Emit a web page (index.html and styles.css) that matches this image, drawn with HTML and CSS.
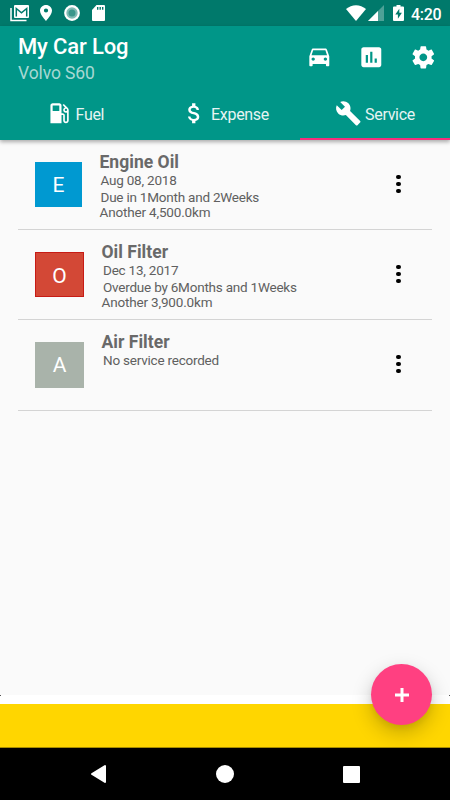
FILE: index.html
```html
<!DOCTYPE html>
<html lang="en">
<head>
<meta charset="utf-8">
<title>My Car Log</title>
<link rel="stylesheet" href="styles.css">
</head>
<body>
<div class="screen">
  <div class="status">
    <svg class="s-mail" width="20" height="18" viewBox="0 0 20 18"><path d="M1 3v12.500h15.500" fill="none" stroke="#fff" stroke-width="1.500"/><rect x="4" y="0" width="15" height="13" rx="1" fill="#fff"/><path d="M6.300 11.500V3.500l5.200 4.300 5.200-4.300v8" fill="none" stroke="#00796b" stroke-width="1.500"/></svg>
    <svg class="s-pin" width="12" height="16" viewBox="5 2 14 20" preserveAspectRatio="none"><path fill="#fff" d="M12 2C8.130 2 5 5.130 5 9c0 5.250 7 13 7 13s7-7.750 7-13c0-3.870-3.130-7-7-7zm0 9.500a2.500 2.500 0 1 1 0-5 2.500 2.500 0 0 1 0 5z"/></svg>
    <svg class="s-ring" width="16" height="16" viewBox="0 0 16 16"><circle cx="8" cy="8" r="7.900" fill="#fff"/><circle cx="8" cy="8" r="5.700" fill="#80bcb5"/><circle cx="8" cy="8" r="3.500" fill="#39978b"/></svg>
    <svg class="s-sd" width="13" height="16" viewBox="0 0 13 16"><path fill="#fff" d="M4.500 0H12q1 0 1 1v14q0 1-1 1H1q-1 0-1-1V5z"/><path stroke="#00796b" stroke-width="1.400" d="M5.700 2v2.800M8.200 2v2.800M10.700 2v2.800"/></svg>
    <span class="grow"></span>
    <svg class="s-wifi" width="20" height="16" viewBox="0 0 20 16"><path fill="#fff" d="M10 16 0 4Q4.500.2 10 .2T20 4z"/></svg>
    <svg class="s-cell" width="16" height="16" viewBox="0 0 16 16"><path fill="#4da197" d="M16 0v16H0z"/><path fill="#fff" d="M10 6v10H0z"/></svg>
    <svg class="s-batt" width="11" height="16" viewBox="0 0 11 16"><path fill="#fff" d="M3.500 0h4v1.500H10q1 0 1 1V15q0 1-1 1H1q-1 0-1-1V2.500q0-1 1-1h2.500z"/><path fill="#00796b" d="M6.300 3.800 2.300 9.500h2.600v4.200l4-6H6.300z"/></svg>
    <span class="clock">4:20</span>
  </div>
  <header class="header">
    <div class="bar">
      <div class="names"><h1>My Car Log</h1><p>Volvo S60</p></div>
      <div class="actions">
        <svg viewBox="0 0 24 24"><path d="M18.920 6.010C18.720 5.420 18.160 5 17.500 5h-11c-.66 0-1.210.42-1.420 1.010L3 12v8c0 .55.450 1 1 1h1c.55 0 1-.45 1-1v-1h12v1c0 .55.450 1 1 1h1c.55 0 1-.45 1-1v-8l-2.080-5.990zM6.500 16c-.83 0-1.500-.67-1.500-1.500S5.670 13 6.500 13s1.500.67 1.500 1.500S7.330 16 6.500 16zm11 0c-.83 0-1.500-.67-1.500-1.500s.67-1.500 1.500-1.500 1.500.67 1.500 1.500-.67 1.500-1.500 1.500zM5 11l1.500-4.500h11L19 11H5z"/></svg>
        <svg viewBox="0 0 24 24"><path d="M19 3H5c-1.100 0-2 .9-2 2v14c0 1.100.9 2 2 2h14c1.100 0 2-.9 2-2V5c0-1.100-.9-2-2-2zM9 17H7v-7h2v7zm4 0h-2V7h2v10zm4 0h-2v-4h2v4z"/></svg>
        <svg viewBox="0 0 24 24"><path d="M19.430 12.980c.04-.32.070-.64.070-.98s-.03-.66-.07-.98l2.110-1.650c.19-.15.240-.42.120-.64l-2-3.460c-.12-.22-.39-.3-.61-.22l-2.490 1c-.52-.4-1.080-.73-1.690-.98l-.38-2.650C14.460 2.180 14.250 2 14 2h-4c-.25 0-.46.180-.49.420l-.38 2.650c-.61.250-1.170.59-1.690.98l-2.490-1c-.23-.09-.49 0-.61.220l-2 3.460c-.13.220-.07.490.12.640l2.110 1.650c-.04.320-.07.650-.07.980s.03.660.07.980l-2.110 1.650c-.19.150-.24.420-.12.640l2 3.460c.12.220.39.300.61.220l2.490-1c.52.400 1.080.73 1.690.98l.38 2.650c.03.240.24.420.49.420h4c.25 0 .46-.18.490-.42l.38-2.650c.61-.25 1.170-.59 1.690-.98l2.490 1c.23.090.49 0 .61-.22l2-3.460c.12-.22.070-.49-.12-.64l-2.110-1.650zM12 15.500c-1.930 0-3.500-1.570-3.500-3.500s1.570-3.500 3.500-3.500 3.500 1.570 3.500 3.500-1.570 3.500-3.500 3.500z"/></svg>
      </div>
    </div>
    <nav class="tabs">
      <div class="tab fuel"><svg viewBox="0 0 24 24"><path d="M19.770 7.230l.01-.01-3.720-3.720L15 4.560l2.110 2.110c-.94.360-1.610 1.260-1.610 2.330 0 1.380 1.120 2.500 2.500 2.500.36 0 .69-.08 1-.21v7.210c0 .55-.45 1-1 1s-1-.45-1-1V14c0-1.100-.9-2-2-2h-1V5c0-1.100-.9-2-2-2H6c-1.100 0-2 .9-2 2v16h10v-7.500h1.500v5c0 1.380 1.120 2.500 2.500 2.500s2.500-1.120 2.500-2.500V9c0-.69-.28-1.320-.73-1.770zM12 10H6V5h6v5zm6 0c-.55 0-1-.45-1-1s.45-1 1-1 1 .45 1 1-.45 1-1 1z"/></svg><span>Fuel</span></div>
      <div class="tab expense"><svg viewBox="0 0 24 24"><path d="M11.800 10.900c-2.270-.59-3-1.200-3-2.150 0-1.090 1.010-1.850 2.700-1.850 1.780 0 2.440.85 2.500 2.100h2.210c-.07-1.720-1.120-3.300-3.210-3.810V3h-3v2.160c-1.940.42-3.500 1.680-3.500 3.610 0 2.310 1.910 3.460 4.700 4.130 2.500.6 3 1.480 3 2.410 0 .69-.49 1.790-2.700 1.790-2.060 0-2.870-.92-2.980-2.100h-2.200c.12 2.190 1.760 3.420 3.680 3.830V21h3v-2.150c1.950-.37 3.500-1.500 3.500-3.550 0-2.840-2.430-3.810-4.700-4.400z"/></svg><span>Expense</span></div>
      <div class="tab service active"><svg viewBox="0 0 24 24"><path d="M22.700 19l-9.100-9.100c.9-2.300.4-5-1.500-6.900-2-2-5-2.400-7.400-1.300L9 6 6 9 1.600 4.700C.4 7.100.9 10.100 2.900 12.100c1.900 1.900 4.600 2.400 6.900 1.500l9.100 9.100c.4.400 1 .4 1.400 0l2.300-2.300c.5-.4.500-1.100.1-1.400z"/></svg><span>Service</span></div>
    </nav>
  </header>
  <main class="list">
    <article class="row first">
      <div class="tile blue">E</div>
      <div class="info"><h2>Engine Oil</h2><p class="date">Aug 08, 2018</p><p class="due">Due in 1Month and 2Weeks</p><p class="km">Another 4,500.0km</p></div>
      <div class="more"><i></i><i></i><i></i></div>
    </article>
    <article class="row">
      <div class="tile red">O</div>
      <div class="info"><h2>Oil Filter</h2><p class="date">Dec 13, 2017</p><p class="due">Overdue by 6Months and 1Weeks</p><p class="km">Another 3,900.0km</p></div>
      <div class="more"><i></i><i></i><i></i></div>
    </article>
    <article class="row last">
      <div class="tile gray">A</div>
      <div class="info"><h2>Air Filter</h2><p class="date">No service recorded</p></div>
      <div class="more"><i></i><i></i><i></i></div>
    </article>
  </main>
  <div class="gap"><i></i><i></i></div>
  <div class="banner"></div>
  <button class="fab" aria-label="Add"><svg width="14" height="14" viewBox="0 0 14 14"><path d="M7 0v14M0 7h14" stroke="#fff" stroke-width="3"/></svg></button>
  <div class="navbar">
    <svg width="17" height="20" viewBox="0 0 17 20"><path d="M2 10 15 2v16z" fill="#fff" stroke="#fff" stroke-width="2" stroke-linejoin="round"/></svg>
    <span class="home"></span>
    <span class="recent"></span>
  </div>
</div>
</body>
</html>
```
FILE: styles.css
```css
* { box-sizing: border-box; margin: 0; padding: 0; }
body { font-family: Roboto, sans-serif; background: #fafafa; }
.screen { position: relative; width: 450px; height: 800px; display: flex; flex-direction: column; overflow: hidden; }
svg { display: block; flex: none; }

.status { height: 26px; flex: none; background: #00796b; display: flex; align-items: flex-start; padding: 5px 9px 0 10px; }
.s-pin { margin-left: 10px; }
.s-ring { margin-left: 12px; }
.s-sd { margin-left: 12px; }
.grow { flex: 1; }
.s-wifi { margin-right: 1px; }
.s-cell { margin-left: 1px; }
.s-batt { margin-left: 9px; }
.clock { width: 30px; margin-left: 7px; margin-right: 0; color: #fff; font-size: 16px; font-weight: 500; line-height: 19px; white-space: nowrap; letter-spacing: -.3px; }

.header { height: 114px; flex: none; background: #009688; display: flex; flex-direction: column; position: relative; z-index: 1; box-shadow: 0 2px 4px rgba(0,0,0,.32); color: #fff; }
.header svg { width: 26.600px; height: 26.600px; fill: #fff; }
.bar { height: 62px; display: flex; justify-content: space-between; padding: 8px 13px 0 18px; }
.names h1 { font-size: 22px; font-weight: 500; line-height: 26px; letter-spacing: -.15px; }
.names p { font-size: 17.500px; line-height: 26px; letter-spacing: -.1px; color: #a6d8d3; }
.actions { display: flex; gap: 25.700px; padding-top: 10px; }
.actions svg:first-child { margin-top: -1px; }
.tabs { height: 52px; display: grid; grid-template-columns: repeat(3, 1fr); }
.tab { display: flex; align-items: center; font-size: 16px; letter-spacing: -.32px; color: #e6f4f3; border-bottom: 2px solid transparent; }
.tab span { margin-left: 3.500px; padding-top: 2px; }
.fuel { padding-left: 45.500px; }
.expense { padding-left: 31px; }
.service { padding-left: 35px; }
.active { border-color: #f52d7c; }

.list { flex: 1; padding: 0 18px; }
.row { height: 90px; display: flex; align-items: flex-start; border-bottom: 1px solid #d4d4d4; padding: 22px 31.500px 0 17px; }
.last { height: 91px; }
.tile { width: 49px; height: 45px; color: #fff; font-size: 21px; line-height: 47px; text-align: center; }
.blue { background: #0099d1; width: 47px; }
.red { background: #d34836; border: 1px solid #c71b15; line-height: 46px; }
.gray { background: #a9b3aa; height: 46px; }
.info { margin: -10px 0 0 17.500px; flex: 1; color: #606060; white-space: nowrap; }
.info h2 { font-size: 17.500px; line-height: 21px; font-weight: 700; color: #696969; letter-spacing: .03px; }
.info p { font-size: 13.500px; line-height: 15px; letter-spacing: -.22px; }
.info .due { margin-top: 2px; padding-left: 1.500px; }
.info .date { padding-left: 1.500px; }
.first .due, .first .date { padding-left: 1px; }
.info .km { line-height: 14px; letter-spacing: -.17px; }
.more { display: flex; flex-direction: column; gap: 2.500px; padding-top: 13.200px; }
.more i { width: 4.300px; height: 4.300px; border-radius: 50%; background: #000; }

.gap { height: 9px; flex: none; background: #fff; display: flex; justify-content: space-between; }
.gap i { width: 1px; height: 1px; background: #555; }
.banner { height: 44px; flex: none; background: #ffd600; border-bottom: 1px solid #a88d00; }
.fab { position: absolute; left: 371px; top: 664px; width: 61px; height: 61px; border: 0; border-radius: 50%; background: #ff4081; box-shadow: 0 8px 20px rgba(0,0,0,.22), 0 3px 6px rgba(0,0,0,.06); display: flex; align-items: center; justify-content: center; }
.navbar { height: 52px; flex: none; background: #000; display: flex; align-items: center; padding-left: 90px; }
.home { width: 18px; height: 18px; border-radius: 50%; background: #fff; margin-left: 109px; }
.recent { width: 17px; height: 17px; border-radius: 1px; background: #fff; margin-left: 109px; }
```
